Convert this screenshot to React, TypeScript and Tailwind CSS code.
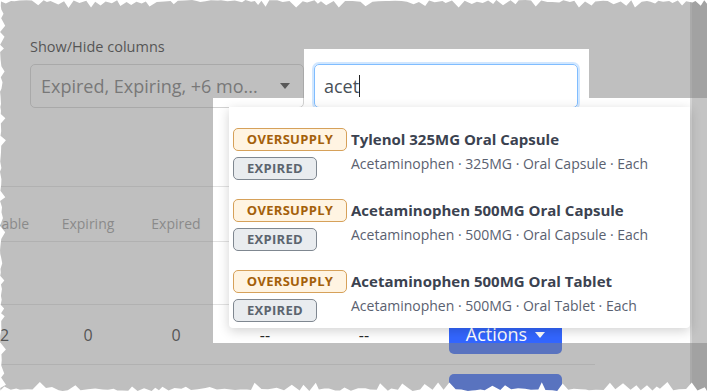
import React from "react";

type Item = { title: string; sub: string };

const items: Item[] = [
  { title: "Tylenol 325MG Oral Capsule", sub: "Acetaminophen · 325MG · Oral Capsule · Each" },
  { title: "Acetaminophen 500MG Oral Capsule", sub: "Acetaminophen · 500MG · Oral Capsule · Each" },
  { title: "Acetaminophen 500MG Oral Tablet", sub: "Acetaminophen · 500MG · Oral Tablet · Each" },
];

// torn paper edge, deterministic zigzag
function rand(seed: number) {
  let s = seed;
  return () => {
    s = (s * 9301 + 49297) % 233280;
    return s / 233280;
  };
}

function edge(len: number, seed: number, base: number, peak: number) {
  const r = rand(seed);
  const pts: [number, number][] = [];
  let p = 0;
  while (p < len) {
    pts.push([p, base * r()]);
    p += 3 + r() * 5;
    pts.push([p, r() < 0.55 ? base + r() * peak : base * r()]);
    p += 3 + r() * 5;
  }
  pts.push([len, 0]);
  return pts;
}

function TornEdges() {
  const top = edge(707, 7, 2, 6);
  const bottom = edge(707, 21, 3, 6);
  const left = edge(391, 13, 1.5, 5);
  const topPts = ["0,0", ...top.map(([x, y]) => `${x},${y}`), "707,0"].join(" ");
  const botPts = ["0,391", ...bottom.map(([x, y]) => `${x},${391 - y}`), "707,391"].join(" ");
  const leftPts = ["0,0", ...left.map(([y, x]) => `${x},${y}`), "0,391"].join(" ");
  return (
    <svg className="absolute inset-0 pointer-events-none" width="707" height="391">
      <polygon points={topPts} fill="#fff" />
      <polygon points={botPts} fill="#fff" />
      <polygon points={leftPts} fill="#fff" />
    </svg>
  );
}

function Badge({ kind }: { kind: "over" | "expired" }) {
  return kind === "over" ? (
    <span className="h-[23px] w-[114px] flex items-center justify-center rounded-[5px] border border-[#d6a15a] bg-[#fff4e2] text-[13px] font-bold tracking-[0.3px] text-[#a4600a]">
      OVERSUPPLY
    </span>
  ) : (
    <span className="h-[23px] w-[84px] flex items-center justify-center rounded-[5px] border border-[#7f8790] bg-[#e9ecef] text-[13px] font-bold tracking-[0.3px] text-[#5c646e]">
      EXPIRED
    </span>
  );
}

const cols = "grid grid-cols-[88px_88px_88px_90px_108px_175px]";

export default function App() {
  return (
    <div className="relative w-[707px] h-[391px] overflow-hidden bg-white font-['Open_Sans',sans-serif]">
      {/* page underneath */}
      <div className="flex h-full">
        <div className="flex-1 pt-[38px]">
          <div className="px-[30px]">
            <div className="text-[14.5px] leading-[18px] text-[#2a2a2a]">Show/Hide columns</div>
            <div className="mt-[8px] flex gap-[10px]">
              <div className="w-[274px] h-[44px] rounded-[5px] border border-[#d2d2d2] flex items-center justify-between pl-[10px] pr-[13px]">
                <span className="text-[18px] text-[#707070]">Expired, Expiring, +6 mo...</span>
                <svg width="10" height="6" viewBox="0 0 10 6">
                  <path d="M0 0h10L5 6z" fill="#333" />
                </svg>
              </div>
              <div className="w-[264px] h-[44px] rounded-[5px] border border-[#80bdff] shadow-[0_0_0_2px_rgba(0,123,255,0.18)] flex items-center px-[9px]">
                <span className="text-[18px] text-[#495057]">acet</span>
                <span className="w-px h-[22px] bg-[#222]" />
              </div>
            </div>
          </div>

          {/* table, scrolled sideways */}
          <div className="mt-[78px] ml-[-44px] w-[639px] text-center">
            <div className={`${cols} h-[55px] items-end pb-[8px] border-t border-[#e2e2e2] text-[14px] leading-[18px] text-[#959595]`}>
              <span>Available</span>
              <span>Expiring</span>
              <span>Expired</span>
            </div>
            <div className="h-[63px] border-t border-[#e2e2e2]" />
            <div className={`${cols} h-[60px] items-center border-t border-[#e2e2e2] text-[16px] text-[#2a2a2a]`}>
              <span>12</span>
              <span>0</span>
              <span>0</span>
              <span>--</span>
              <span>--</span>
              <span className="flex justify-center">
                <span className="w-[113px] h-[38px] rounded-[5px] bg-[#3366ff] text-white text-[18px] flex items-center justify-center gap-[8px]">
                  Actions
                  <svg width="10" height="6" viewBox="0 0 10 6">
                    <path d="M0 0h10L5 6z" fill="#fff" />
                  </svg>
                </span>
              </span>
            </div>
            <div className={`${cols} h-[60px] border-t border-[#e2e2e2] pt-[9px]`}>
              <span />
              <span />
              <span />
              <span />
              <span />
              <span className="flex justify-center">
                <span className="w-[113px] h-[38px] rounded-[5px] bg-[#3366ff]" />
              </span>
            </div>
          </div>
        </div>
        <div className="w-[17px] bg-[#c4c4c4] border-l-2 border-[#d4d4d4]" />
      </div>

      {/* dimming overlay with spotlight cut-outs */}
      <svg className="absolute inset-0" width="707" height="391">
        <path
          d="M0 0H707V391H0Z M304 49H589V98H304Z M213 98H707V343H213Z"
          fillRule="evenodd"
          fill="rgba(128,128,128,0.5)"
        />
      </svg>

      {/* search results */}
      <div className="absolute left-[229px] top-[107px] w-[461px] h-[221px] bg-white rounded-b-[4px] shadow-[0_3px_12px_rgba(0,0,0,0.18)] pt-[21px] pl-[4px] flex flex-col gap-[19px]">
        {items.map((it) => (
          <div key={it.title} className="flex gap-[4px]">
            <div className="flex flex-col gap-[6px] items-start">
              <Badge kind="over" />
              <Badge kind="expired" />
            </div>
            <div className="flex flex-col">
              <span className="text-[15px] leading-[22px] font-bold text-[#3b4250]">{it.title}</span>
              <span className="mt-[4px] text-[14px] leading-[20px] text-[#5a6170]">{it.sub}</span>
            </div>
          </div>
        ))}
      </div>

      <TornEdges />
    </div>
  );
}
